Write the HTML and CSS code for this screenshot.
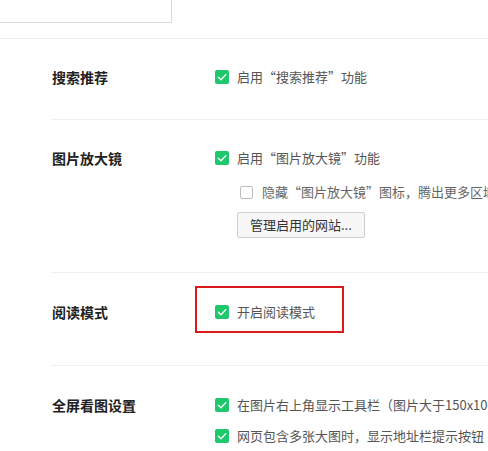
FILE: index.html
```html
<!DOCTYPE html>
<html lang="zh-CN">
<head>
<meta charset="utf-8">
<title>设置</title>
<link rel="stylesheet" href="styles.css">
</head>
<body>
<div class="top">
  <div class="top-box"></div>
</div>

<section class="sec sec-first">
  <div class="label">搜索推荐</div>
  <div class="opts">
    <div class="opt"><span class="cb on"><svg viewBox="0 0 14 14"><path d="M3.3 7.2 L6 9.8 L10.8 4.6"/></svg></span><span class="txt">启用“搜索推荐”功能</span></div>
  </div>
</section>

<section class="sec sec-mag">
  <div class="label">图片放大镜</div>
  <div class="opts">
    <div class="opt"><span class="cb on"><svg viewBox="0 0 14 14"><path d="M3.3 7.2 L6 9.8 L10.8 4.6"/></svg></span><span class="txt">启用“图片放大镜”功能</span></div>
    <div class="opt sub"><span class="cb off"></span><span class="txt">隐藏“图片放大镜”图标，腾出更多区域</span></div>
    <button class="btn">管理启用的网站...</button>
  </div>
</section>

<section class="sec sec-read">
  <div class="label">阅读模式</div>
  <div class="opts">
    <div class="opt mark"><span class="cb on"><svg viewBox="0 0 14 14"><path d="M3.3 7.2 L6 9.8 L10.8 4.6"/></svg></span><span class="txt">开启阅读模式</span><span class="redbox"></span></div>
  </div>
</section>

<section class="sec sec-full">
  <div class="label">全屏看图设置</div>
  <div class="opts">
    <div class="opt"><span class="cb on"><svg viewBox="0 0 14 14"><path d="M3.3 7.2 L6 9.8 L10.8 4.6"/></svg></span><span class="txt">在图片右上角显示工具栏（图片大于150x100时）</span></div>
    <div class="opt"><span class="cb on"><svg viewBox="0 0 14 14"><path d="M3.3 7.2 L6 9.8 L10.8 4.6"/></svg></span><span class="txt">网页包含多张大图时，显示地址栏提示按钮</span></div>
  </div>
</section>
</body>
</html>
```

FILE: styles.css
```css
html, body {
  margin: 0;
  padding: 0;
  background: #fff;
  overflow: hidden;
}
body {
  width: 488px;
  height: 451px;
  font-family: "Noto Sans CJK SC", "Microsoft YaHei", sans-serif;
  color: #333;
}
.top {
  height: 38px;
  border-bottom: 1px solid #ececec;
  overflow: hidden;
}
.top-box {
  width: 180px;
  height: 41px;
  margin-top: -20px;
  margin-left: -10px;
  border: 1px solid #d9d9d9;
  background: #fff;
}
.sec {
  display: flex;
  margin-left: 51px;
  border-top: 1px solid #f0f0f0;
}
.sec-first {
  border-top: none;
  padding: 28px 0 32px;
}
.sec-mag {
  padding: 28px 0 34px;
}
.sec-read {
  padding: 29px 0 43px;
}
.sec-full {
  padding: 29px 0 0;
}
.label {
  width: 163px;
  flex: none;
  padding-left: 1px;
  font-size: 14px;
  font-weight: bold;
  line-height: 20px;
  color: #222;
}
.opts {
  display: flex;
  flex-direction: column;
  align-items: flex-start;
  gap: 11px;
}
.opt {
  display: flex;
  align-items: center;
  height: 20px;
  white-space: nowrap;
  position: relative;
}
.opt.sub {
  margin-top: 3px;
  padding-left: 25px;
}
.cb {
  flex: none;
  width: 14px;
  height: 14px;
  border-radius: 2px;
  box-sizing: border-box;
  display: flex;
  align-items: center;
  justify-content: center;
}
.cb.on {
  background: #1fc86d;
}
.cb.on svg {
  width: 14px;
  height: 14px;
}
.cb.on path {
  fill: none;
  stroke: #fff;
  stroke-width: 1.3;
  stroke-linecap: round;
  stroke-linejoin: round;
}
.cb.off {
  width: 13px;
  height: 13px;
  border: 1px solid #bdbdbd;
  background: #fff;
}
.txt {
  margin-left: 8px;
  font-size: 13px;
  line-height: 20px;
  color: #555;
}
.sub .txt {
  margin-left: 9px;
  color: #666;
}
.btn {
  margin: 0 0 0 22px;
  height: 26px;
  padding: 0 12px;
  border: 1px solid #cfcfcf;
  border-radius: 2px;
  background: #f7f7f7;
  font-family: inherit;
  font-size: 13px;
  color: #333;
  line-height: 24px;
}
.sec-mag .btn {
  margin-top: -1px;
}
.redbox {
  position: absolute;
  left: -20px;
  top: -16px;
  width: 145px;
  height: 43px;
  border: 2px solid #d81b1b;
  pointer-events: none;
}
```
